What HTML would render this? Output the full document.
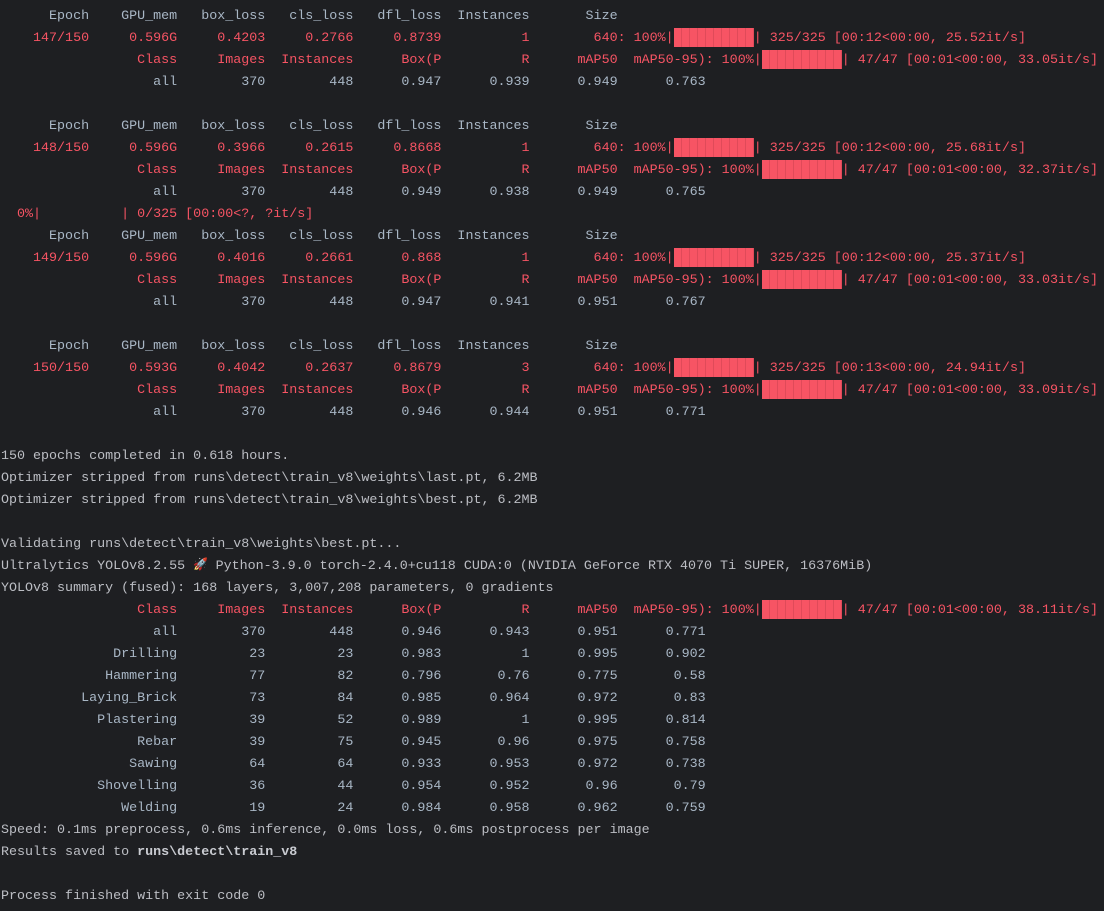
<!DOCTYPE html>
<html><head><meta charset="utf-8"><style>
html,body{margin:0;padding:0;background:#1e1f22;width:1104px;height:911px;overflow:hidden}
pre{margin:0;padding:6px 0 0 1px;font-family:"Liberation Mono","DejaVu Sans Mono",monospace;font-size:13.35px;line-height:22px;color:#a9b7c6;white-space:pre}
.r{color:#f75464}
.p{color:#bcbec4}
.b{display:inline-block;width:10ch;height:19px;margin:-8px 0;vertical-align:middle;background:repeating-linear-gradient(90deg,#f75464 0,#f75464 7px,#e04a59 7px,#e04a59 8.01px)}
.k{display:inline-block;width:2ch;height:10px;line-height:10px;text-align:center;vertical-align:middle;font-size:12px}
b{font-weight:bold;color:#c9cbd1}
</style></head><body><pre>      Epoch    GPU_mem   box_loss   cls_loss   dfl_loss  Instances       Size
<span class="r">    147/150     0.596G     0.4203     0.2766     0.8739          1        640: 100%|<span class="b"></span>| 325/325 [00:12&lt;00:00, 25.52it/s]</span>
<span class="r">                 Class     Images  Instances      Box(P          R      mAP50  mAP50-95): 100%|<span class="b"></span>| 47/47 [00:01&lt;00:00, 33.05it/s]</span>
                   all        370        448      0.947      0.939      0.949      0.763

      Epoch    GPU_mem   box_loss   cls_loss   dfl_loss  Instances       Size
<span class="r">    148/150     0.596G     0.3966     0.2615     0.8668          1        640: 100%|<span class="b"></span>| 325/325 [00:12&lt;00:00, 25.68it/s]</span>
<span class="r">                 Class     Images  Instances      Box(P          R      mAP50  mAP50-95): 100%|<span class="b"></span>| 47/47 [00:01&lt;00:00, 32.37it/s]</span>
                   all        370        448      0.949      0.938      0.949      0.765
<span class="r">  0%|          | 0/325 [00:00&lt;?, ?it/s]</span>
      Epoch    GPU_mem   box_loss   cls_loss   dfl_loss  Instances       Size
<span class="r">    149/150     0.596G     0.4016     0.2661      0.868          1        640: 100%|<span class="b"></span>| 325/325 [00:12&lt;00:00, 25.37it/s]</span>
<span class="r">                 Class     Images  Instances      Box(P          R      mAP50  mAP50-95): 100%|<span class="b"></span>| 47/47 [00:01&lt;00:00, 33.03it/s]</span>
                   all        370        448      0.947      0.941      0.951      0.767

      Epoch    GPU_mem   box_loss   cls_loss   dfl_loss  Instances       Size
<span class="r">    150/150     0.593G     0.4042     0.2637     0.8679          3        640: 100%|<span class="b"></span>| 325/325 [00:13&lt;00:00, 24.94it/s]</span>
<span class="r">                 Class     Images  Instances      Box(P          R      mAP50  mAP50-95): 100%|<span class="b"></span>| 47/47 [00:01&lt;00:00, 33.09it/s]</span>
                   all        370        448      0.946      0.944      0.951      0.771

<span class="p">150 epochs completed in 0.618 hours.
Optimizer stripped from runs\detect\train_v8\weights\last.pt, 6.2MB
Optimizer stripped from runs\detect\train_v8\weights\best.pt, 6.2MB

Validating runs\detect\train_v8\weights\best.pt...
Ultralytics YOLOv8.2.55 <span class="k">🚀</span> Python-3.9.0 torch-2.4.0+cu118 CUDA:0 (NVIDIA GeForce RTX 4070 Ti SUPER, 16376MiB)
YOLOv8 summary (fused): 168 layers, 3,007,208 parameters, 0 gradients</span>
<span class="r">                 Class     Images  Instances      Box(P          R      mAP50  mAP50-95): 100%|<span class="b"></span>| 47/47 [00:01&lt;00:00, 38.11it/s]</span>
                   all        370        448      0.946      0.943      0.951      0.771
              Drilling         23         23      0.983          1      0.995      0.902
             Hammering         77         82      0.796       0.76      0.775       0.58
          Laying_Brick         73         84      0.985      0.964      0.972       0.83
            Plastering         39         52      0.989          1      0.995      0.814
                 Rebar         39         75      0.945       0.96      0.975      0.758
                Sawing         64         64      0.933      0.953      0.972      0.738
            Shovelling         36         44      0.954      0.952       0.96       0.79
               Welding         19         24      0.984      0.958      0.962      0.759
<span class="p">Speed: 0.1ms preprocess, 0.6ms inference, 0.0ms loss, 0.6ms postprocess per image
Results saved to <b>runs\detect\train_v8</b>

Process finished with exit code 0</span>
</pre></body></html>
